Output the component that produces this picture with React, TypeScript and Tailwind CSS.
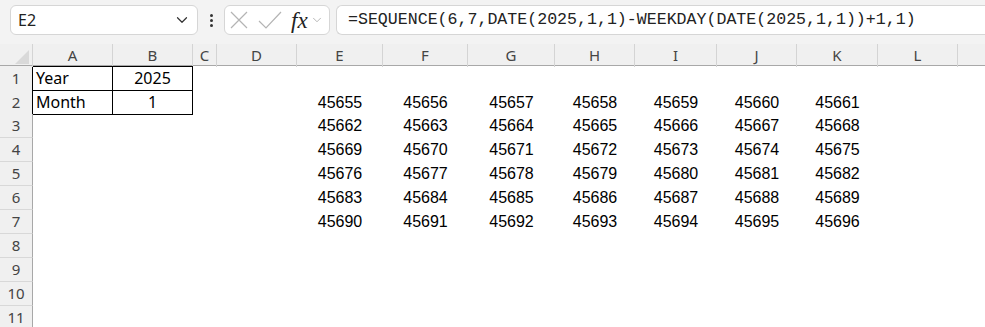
import { ChevronDown } from 'lucide-react'

const cols = ['A', 'B', 'C', 'D', 'E', 'F', 'G', 'H', 'I', 'J', 'K', 'L', '']
const start = 45655

function Header() {
  return (
    <div className="grid grid-cols-[33px_80px_80px_24px_80px_86px_85px_87px_80px_82px_80px_81px_80px_1fr] h-[22px] bg-[#f0f0f0] border-b border-[#a8a8a8]">
      <div className="relative border-r border-[#d4d4d4]">
        <div className="absolute right-[3px] bottom-[3px] w-0 h-0 border-l-[14px] border-l-transparent border-b-[14px] border-b-[#d9d9d9]" />
      </div>
      {cols.map((c, i) => (
        <div
          key={i}
          className={`flex items-center justify-center text-[15px] text-[#444] ${i < cols.length - 1 ? 'border-r border-[#d4d4d4]' : ''}`}
        >
          {c}
        </div>
      ))}
    </div>
  )
}

function Row({ n }: { n: number }) {
  const nums = n >= 2 && n <= 7 ? Array.from({ length: 7 }, (_, k) => start + (n - 2) * 7 + k) : null
  const inTable = n <= 2
  return (
    <div className="grid grid-cols-[33px_80px_80px_24px_80px_86px_85px_87px_80px_82px_80px_81px_80px_1fr] h-[24px]">
      <div
        className={`flex items-center justify-center bg-[#f0f0f0] border-r border-b border-b-[#d8d8d8] text-[15px] text-[#444] ${inTable ? 'border-r-black' : 'border-r-[#a8a8a8]'}`}
      >
        {n}
      </div>
      {n === 1 && (
        <>
          <div className="flex items-center pl-[3px] border-r border-b border-black shadow-[inset_0_1px_0_#000] text-[16px]">Year</div>
          <div className="flex items-center justify-center border-r border-b border-black shadow-[inset_0_1px_0_#000] text-[16px]">2025</div>
        </>
      )}
      {n === 2 && (
        <>
          <div className="flex items-center pl-[3px] border-r border-b border-black text-[16px]">Month</div>
          <div className="flex items-center justify-center border-r border-b border-black text-[16px]">1</div>
        </>
      )}
      {n > 2 && (
        <>
          <div />
          <div />
        </>
      )}
      <div />
      <div />
      {nums
        ? nums.map((v) => (
            <div key={v} className="flex items-center justify-center font-['Liberation_Sans',sans-serif] text-[16px]">
              {v}
            </div>
          ))
        : Array.from({ length: 7 }, (_, k) => <div key={k} />)}
      <div />
      <div />
    </div>
  )
}

export default function App() {
  return (
    <div className="w-[985px] h-[327px] overflow-hidden bg-white text-black font-['Noto_Sans','Open_Sans',sans-serif]">
      {/* Formula bar */}
      <div className="h-[44px] bg-[#f3f3f3] flex items-start pt-[5px] pl-[10px]">
        <div className="w-[188px] h-[30px] bg-white border border-[#d6d6d6] rounded-[6px] flex items-center justify-between pl-[7px] pr-[6px]">
          <span className="text-[16px] text-[#222]">E2</span>
          <ChevronDown size={18} strokeWidth={1.6} className="text-[#333]" />
        </div>
        <div className="w-[26px] h-[30px] flex flex-col items-center justify-center gap-[2px]">
          <span className="w-[3px] h-[3px] bg-[#333] rounded-full" />
          <span className="w-[3px] h-[3px] bg-[#333] rounded-full" />
          <span className="w-[3px] h-[3px] bg-[#333] rounded-full" />
        </div>
        <div className="w-[106px] h-[30px] bg-white border border-[#d6d6d6] rounded-[6px] flex items-center pl-[4px]">
          <svg width="20" height="20" viewBox="0 0 20 20" fill="none" stroke="#b4b4b4" strokeWidth="1.2">
            <path d="M2 2 L18 18 M18 2 L2 18" />
          </svg>
          <svg width="24" height="20" viewBox="0 0 24 20" fill="none" stroke="#b4b4b4" strokeWidth="1.2" className="ml-[9px]">
            <path d="M1 11 L8 18 L23 2" />
          </svg>
          <div className="flex items-center ml-[9px]">
            <span className="font-['Liberation_Serif',serif] italic text-[23px] text-[#222] leading-none">fx</span>
            <ChevronDown size={14} strokeWidth={1.2} className="text-[#999] ml-[2px]" />
          </div>
        </div>
        <div className="ml-[6px] flex-1 h-[30px] bg-white border border-[#d6d6d6] border-r-0 rounded-l-[6px] flex items-center pl-[11px]">
          <span className="font-['Liberation_Mono',monospace] text-[16.6px] text-[#222] whitespace-nowrap">
            =SEQUENCE(6,7,DATE(2025,1,1)-WEEKDAY(DATE(2025,1,1))+1,1)
          </span>
        </div>
      </div>
      <Header />
      {Array.from({ length: 11 }, (_, i) => (
        <Row key={i} n={i + 1} />
      ))}
    </div>
  )
}
